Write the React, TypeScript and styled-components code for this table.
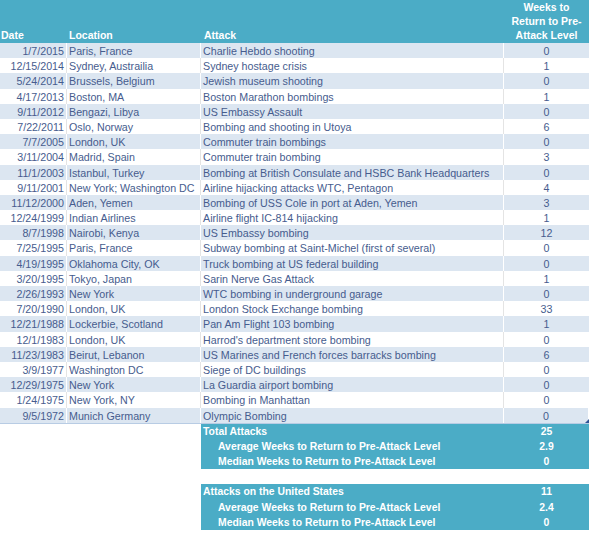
import React from 'react';
import styled, { createGlobalStyle } from 'styled-components';

const GlobalStyle = createGlobalStyle`
    body {
        margin: 0;
        background: #ffffff;
        font-family: "Liberation Sans", Arial, sans-serif;
    }
`

const TEAL = '#4BACC6'
const STRIPE = '#DCE6F1'
const INK = '#465C8E'
const COLS = '67px 134px 303px 85px'

const Sheet = styled.div`
    width: 589px;
    font-size: 10.7px;
    color: ${INK};
`

const HeaderRow = styled.div`
    display: grid;
    grid-template-columns: ${COLS};
    height: 43px;
    background: ${TEAL};
    color: #ffffff;
    font-weight: bold;
    font-size: 10.5px;
    align-items: end;
`

const HeadCell = styled.div<{ $pad?: number }>`
    padding: 0 0 1px ${p => p.$pad ?? 2}px;
    line-height: 14px;
`

const HeadWeeks = styled.div`
    text-align: center;
    line-height: 14px;
    padding-bottom: 1px;
`

const Body = styled.div`
    border-bottom: 1px solid #B8CCE4;
`

const Row = styled.div<{ $odd: boolean }>`
    display: grid;
    grid-template-columns: ${COLS};
    height: 15.2px;
    line-height: 16px;
    background: ${p => (p.$odd ? STRIPE : '#ffffff')};
    position: relative;

    & > div {
        border-right: 1px solid ${p => (p.$odd ? '#ffffff' : '#E4E4E4')};
        white-space: nowrap;
        overflow: hidden;
    }
    & > div:last-child {
        border-right: none;
    }
`

const DateCell = styled.div`
    text-align: right;
    padding-right: 2px;
`

const TextCell = styled.div`
    padding-left: 2px;
`

const NumCell = styled.div`
    text-align: center;
`

const Handle = styled.span`
    position: absolute;
    right: 0;
    bottom: 0;
    width: 0;
    height: 0;
    border-left: 4px solid transparent;
    border-bottom: 4px solid #2F5597;
`

const Summary = styled.div`
    display: grid;
    grid-template-columns: 201px 388px;
    margin-bottom: 15.2px;
`

const SummaryBox = styled.div`
    grid-column: 2;
    background: ${TEAL};
    color: #ffffff;
    font-weight: bold;
    font-size: 10.4px;
`

const SumRow = styled.div`
    display: grid;
    grid-template-columns: 303px 85px;
    height: 15.2px;
    line-height: 16px;
`

const SumLabel = styled.div<{ $indent?: boolean }>`
    padding-left: ${p => (p.$indent ? 17 : 2)}px;
`

const rows: [string, string, string, string][] = [
    ['1/7/2015', 'Paris, France', 'Charlie Hebdo shooting', '0'],
    ['12/15/2014', 'Sydney, Austrailia', 'Sydney hostage crisis', '1'],
    ['5/24/2014', 'Brussels, Belgium', 'Jewish museum shooting', '0'],
    ['4/17/2013', 'Boston, MA', 'Boston Marathon bombings', '1'],
    ['9/11/2012', 'Bengazi, Libya', 'US Embassy Assault', '0'],
    ['7/22/2011', 'Oslo, Norway', 'Bombing and shooting in Utoya', '6'],
    ['7/7/2005', 'London, UK', 'Commuter train bombings', '0'],
    ['3/11/2004', 'Madrid, Spain', 'Commuter train bombing', '3'],
    ['11/1/2003', 'Istanbul, Turkey', 'Bombing at British Consulate and HSBC Bank Headquarters', '0'],
    ['9/11/2001', 'New York; Washington DC', 'Airline hijacking attacks WTC, Pentagon', '4'],
    ['11/12/2000', 'Aden, Yemen', 'Bombing of USS Cole in port at Aden, Yemen', '3'],
    ['12/24/1999', 'Indian Airlines', 'Airline flight IC-814 hijacking', '1'],
    ['8/7/1998', 'Nairobi, Kenya', 'US Embassy bombing', '12'],
    ['7/25/1995', 'Paris, France', 'Subway bombing at Saint-Michel (first of several)', '0'],
    ['4/19/1995', 'Oklahoma City, OK', 'Truck bombing at US federal building', '0'],
    ['3/20/1995', 'Tokyo, Japan', 'Sarin Nerve Gas Attack', '1'],
    ['2/26/1993', 'New York', 'WTC bombing in underground garage', '0'],
    ['7/20/1990', 'London, UK', 'London Stock Exchange bombing', '33'],
    ['12/21/1988', 'Lockerbie, Scotland', 'Pan Am Flight 103 bombing', '1'],
    ['12/1/1983', 'London, UK', "Harrod's department store bombing", '0'],
    ['11/23/1983', 'Beirut, Lebanon', 'US Marines and French forces barracks bombing', '6'],
    ['3/9/1977', 'Washington DC', 'Siege of DC buildings', '0'],
    ['12/29/1975', 'New York', 'La Guardia airport bombing', '0'],
    ['1/24/1975', 'New York, NY', 'Bombing in Manhattan', '0'],
    ['9/5/1972', 'Munich Germany', 'Olympic Bombing', '0'],
]

const summaries = [
    { title: 'Total Attacks', count: '25', avg: '2.9', median: '0' },
    { title: 'Attacks on the United States', count: '11', avg: '2.4', median: '0' },
]

export default function App() {
    return (
        <Sheet>
            <GlobalStyle />
            <HeaderRow>
                <HeadCell $pad={1}>Date</HeadCell>
                <HeadCell>Location</HeadCell>
                <HeadCell $pad={3}>Attack</HeadCell>
                <HeadWeeks>Weeks to<br />Return to Pre-<br />Attack Level</HeadWeeks>
            </HeaderRow>
            <Body>
                {rows.map((r, i) => (
                    <Row key={i} $odd={i % 2 === 0}>
                        <DateCell>{r[0]}</DateCell>
                        <TextCell>{r[1]}</TextCell>
                        <TextCell>{r[2]}</TextCell>
                        <NumCell>{r[3]}</NumCell>
                        {i === rows.length - 1 && <Handle />}
                    </Row>
                ))}
            </Body>
            {summaries.map(s => (
                <Summary key={s.title}>
                    <SummaryBox>
                        <SumRow>
                            <SumLabel>{s.title}</SumLabel>
                            <NumCell>{s.count}</NumCell>
                        </SumRow>
                        <SumRow>
                            <SumLabel $indent>Average Weeks to Return to Pre-Attack Level</SumLabel>
                            <NumCell>{s.avg}</NumCell>
                        </SumRow>
                        <SumRow>
                            <SumLabel $indent>Median Weeks to Return to Pre-Attack Level</SumLabel>
                            <NumCell>{s.median}</NumCell>
                        </SumRow>
                    </SummaryBox>
                </Summary>
            ))}
        </Sheet>
    )
}
